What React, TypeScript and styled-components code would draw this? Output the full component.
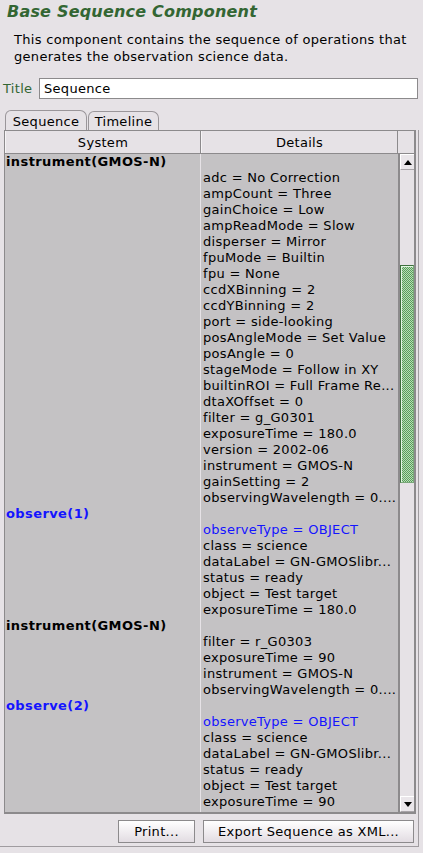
import React from "react";
import styled, { createGlobalStyle } from "styled-components";

const GlobalStyle = createGlobalStyle`
  html, body { margin: 0; padding: 0; background: #e6e2e6; }
  body { font-family: "DejaVu Sans", "Liberation Sans", sans-serif; font-size: 13px; color: #000; }
  * { box-sizing: border-box; }
`;

const Page = styled.div`
  width: 423px;
  height: 853px;
  overflow: hidden;
  background: #e6e2e6;
  letter-spacing: 0.3px;
`;

const Heading = styled.h1`
  margin: 0;
  padding: 2px 0 0 7px;
  font-size: 16px;
  line-height: 20px;
  font-weight: bold;
  font-style: italic;
  color: #336633;
  letter-spacing: 0.2px;
`;

const Description = styled.div`
  margin-top: 9px;
  padding-left: 14px;
  font-size: 13px;
  line-height: 17px;
  letter-spacing: 0.3px;
`;

const Line = styled.div`
  white-space: nowrap;
`;

const TitleRow = styled.div`
  display: flex;
  align-items: center;
  margin-top: 13px;
  height: 21px;
  padding: 0 5px 0 3px;
`;

const TitleLabel = styled.label`
  width: 36px;
  color: #336633;
  font-size: 13px;
`;

const TitleInput = styled.input`
  flex: 1;
  height: 21px;
  border: 1px solid #8c8a8c;
  background: #fff;
  padding: 0 4px;
  font-family: inherit;
  font-size: 13px;
  letter-spacing: 0.3px;
  color: #000;
  outline: none;
`;

const TabBar = styled.div`
  display: flex;
  margin-top: 11px;
  height: 20px;
  padding-left: 5px;
  align-items: flex-end;
`;

const Tab = styled.div<{ $active?: boolean; $w: number }>`
  width: ${(p) => p.$w}px;
  height: ${(p) => (p.$active ? 20 : 19)}px;
  margin-right: 1px;
  border: 1px solid #9a969a;
  border-bottom: none;
  border-radius: 6px 7px 0 0;
  background: #e6e2e6;
  display: flex;
  align-items: center;
  justify-content: center;
  font-size: 13px;
  padding-top: 1px;
`;

const TabPanel = styled.div`
  width: 419px;
  border-right: 1px solid #a09ca0;
  border-bottom: 1px solid #a09ca0;
`;

const Table = styled.div`
  margin-left: 4px;
  width: 412px;
  border-top: 1px solid #8c8a8c;
  border-left: 1px solid #8c8a8c;
  border-right: 2px solid #8c8a8c;
  border-bottom: 2px solid #8c8a8c;
`;

const HeaderRow = styled.div`
  display: grid;
  grid-template-columns: 196px 197px 16px;
  height: 23px;
  border-bottom: 1px solid #8c8a8c;
  background: #e6e2e6;
`;

const HeaderCell = styled.div`
  display: flex;
  align-items: center;
  justify-content: center;
  border-right: 1px solid #8c8a8c;
  border-left: 1px solid #f6f4f6;
  font-size: 13px;
  padding-top: 1px;
`;

const HeaderCorner = styled.div`
  background: #e6e2e6;
`;

const Body = styled.div`
  display: grid;
  grid-template-columns: 196px 197px 16px;
  height: 658px;
  background: #c4c2c4;
  overflow: hidden;
`;

const Column = styled.div<{ $sep?: boolean }>`
  display: flex;
  flex-direction: column;
  border-right: ${(p) => (p.$sep ? "1px solid #e6e2e6" : "none")};
  padding-left: ${(p) => (p.$sep ? 1 : 2)}px;
  overflow: hidden;
`;

const Cell = styled.div<{ $bold?: boolean; $blue?: boolean }>`
  height: 16px;
  line-height: 16px;
  white-space: nowrap;
  font-size: 13px;
  font-weight: ${(p) => (p.$bold ? "bold" : "normal")};
  letter-spacing: ${(p) => (p.$bold ? "0.4px" : "0.3px")};
  color: ${(p) => (p.$blue ? "#1414ff" : "#000")};
`;

const ScrollBar = styled.div`
  display: flex;
  flex-direction: column;
  border-left: 2px solid #8c8a8c;
  background: #e6e2e6;
`;

const ArrowButton = styled.div`
  height: 16px;
  display: flex;
  align-items: center;
  justify-content: center;
  background: #eae6ea;
  border-left: 1px solid #ffffff;
  border-bottom: 1px solid #a8a4a8;
  border-top: 1px solid #ffffff;
`;

const Track = styled.div`
  flex: 1;
  display: flex;
  flex-direction: column;
`;

const Thumb = styled.div<{ $top: number; $h: number }>`
  margin-top: ${(p) => p.$top}px;
  height: ${(p) => p.$h}px;
  border: 1px solid #3d6e3d;
  border-right-color: #7aa87a;
  border-bottom-color: #7aa87a;
  background-color: #b4e2b4;
  background-image: conic-gradient(
    #5c985c 0 25%,
    transparent 0 50%,
    #5c985c 0 75%,
    transparent 0
  );
  background-size: 2px 2px;
  box-shadow: inset 1px 1px 0 #e2f6e2;
`;

const ButtonRow = styled.div`
  display: flex;
  justify-content: flex-end;
  gap: 8px;
  padding: 6px 4px 3px 0;
`;

const Button = styled.button<{ $w: number }>`
  width: ${(p) => p.$w}px;
  height: 23px;
  border: 1px solid #8c8a8c;
  background: linear-gradient(#ffffff, #e2dce2);
  font-family: inherit;
  font-size: 13px;
  letter-spacing: 0.3px;
  color: #000;
  padding: 0;
`;

type Group = { system: string; observe?: boolean; details: string[] };

const groups: Group[] = [
  {
    system: "instrument(GMOS-N)",
    details: [
      "adc = No Correction",
      "ampCount = Three",
      "gainChoice = Low",
      "ampReadMode = Slow",
      "disperser = Mirror",
      "fpuMode = Builtin",
      "fpu = None",
      "ccdXBinning = 2",
      "ccdYBinning = 2",
      "port = side-looking",
      "posAngleMode = Set Value",
      "posAngle = 0",
      "stageMode = Follow in XY",
      "builtinROI = Full Frame Re...",
      "dtaXOffset = 0",
      "filter = g_G0301",
      "exposureTime = 180.0",
      "version = 2002-06",
      "instrument = GMOS-N",
      "gainSetting = 2",
      "observingWavelength = 0....",
    ],
  },
  {
    system: "observe(1)",
    observe: true,
    details: [
      "observeType = OBJECT",
      "class = science",
      "dataLabel = GN-GMOSlibr...",
      "status = ready",
      "object = Test target",
      "exposureTime = 180.0",
    ],
  },
  {
    system: "instrument(GMOS-N)",
    details: [
      "filter = r_G0303",
      "exposureTime = 90",
      "instrument = GMOS-N",
      "observingWavelength = 0....",
    ],
  },
  {
    system: "observe(2)",
    observe: true,
    details: [
      "observeType = OBJECT",
      "class = science",
      "dataLabel = GN-GMOSlibr...",
      "status = ready",
      "object = Test target",
      "exposureTime = 90",
    ],
  },
];

const UpArrow = () => (
  <svg width="8" height="5" viewBox="0 0 8 5">
    <path d="M0 5 L4 0 L8 5 Z" fill="#000" />
  </svg>
);

const DownArrow = () => (
  <svg width="8" height="5" viewBox="0 0 8 5">
    <path d="M0 0 L8 0 L4 5 Z" fill="#000" />
  </svg>
);

export default function App() {
  const systemCells: React.ReactNode[] = [];
  const detailCells: React.ReactNode[] = [];
  groups.forEach((g, gi) => {
    systemCells.push(
      <Cell key={`s${gi}`} $bold $blue={g.observe}>
        {g.system}
      </Cell>
    );
    detailCells.push(<Cell key={`d${gi}`} />);
    g.details.forEach((d, di) => {
      systemCells.push(<Cell key={`s${gi}-${di}`} />);
      detailCells.push(
        <Cell key={`d${gi}-${di}`} $blue={g.observe && di === 0}>
          {d}
        </Cell>
      );
    });
  });

  return (
    <Page>
      <GlobalStyle />
      <Heading>Base Sequence Component</Heading>
      <Description>
        <Line>This component contains the sequence of operations that</Line>
        <Line>generates the observation science data.</Line>
      </Description>
      <TitleRow>
        <TitleLabel>Title</TitleLabel>
        <TitleInput value="Sequence" readOnly />
      </TitleRow>
      <TabBar>
        <Tab $active $w={82}>Sequence</Tab>
        <Tab $w={71}>Timeline</Tab>
      </TabBar>
      <TabPanel>
        <Table>
          <HeaderRow>
            <HeaderCell>System</HeaderCell>
            <HeaderCell>Details</HeaderCell>
            <HeaderCorner />
          </HeaderRow>
          <Body>
            <Column $sep>{systemCells}</Column>
            <Column>{detailCells}</Column>
            <ScrollBar>
              <ArrowButton>
                <UpArrow />
              </ArrowButton>
              <Track>
                <Thumb $top={95} $h={218} />
              </Track>
              <ArrowButton>
                <DownArrow />
              </ArrowButton>
            </ScrollBar>
          </Body>
        </Table>
        <ButtonRow>
          <Button $w={77}>Print...</Button>
          <Button $w={211}>Export Sequence as XML...</Button>
        </ButtonRow>
      </TabPanel>
    </Page>
  );
}
